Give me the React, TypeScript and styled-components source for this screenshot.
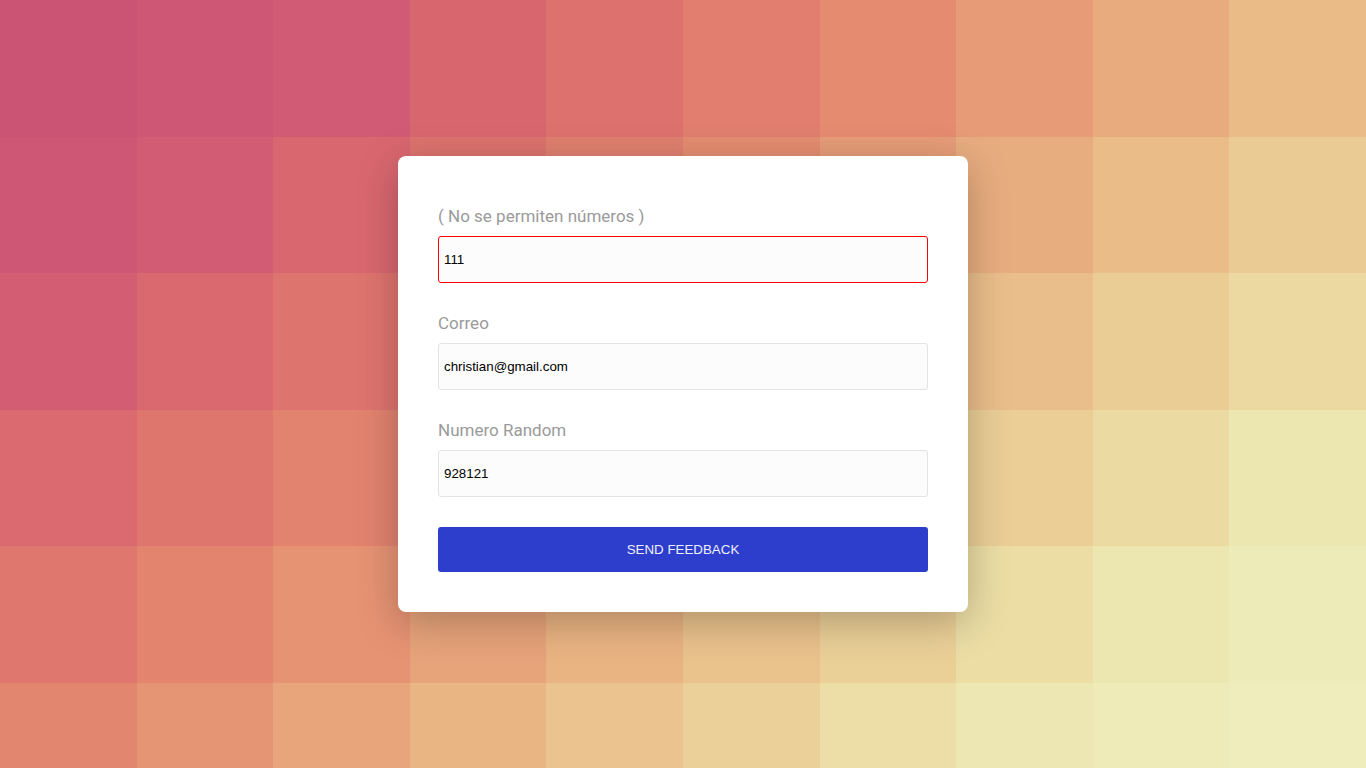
import React from "react";
import styled, { createGlobalStyle } from "styled-components";

const GlobalStyle = createGlobalStyle`
  html, body { margin: 0; padding: 0; height: 100%; overflow: hidden; }
  body { font-family: "Liberation Sans", Arial, sans-serif; }
  * { box-sizing: border-box; }
`;

const STOPS: [number, number, number][] = [
  [203, 84, 117],
  [206, 87, 118],
  [209, 91, 116],
  [216, 102, 111],
  [221, 113, 110],
  [225, 126, 111],
  [229, 139, 112],
  [231, 155, 119],
  [232, 171, 126],
  [234, 187, 135],
  [234, 201, 146],
  [235, 214, 157],
  [236, 228, 172],
  [237, 234, 183],
  [238, 236, 186],
  [239, 237, 188],
];

function tileColor(c: number, r: number): string {
  const p = Math.min(c + 1.12 * r, STOPS.length - 1.001);
  const i = Math.floor(p);
  const t = p - i;
  const a = STOPS[i];
  const b = STOPS[i + 1];
  const mix = (k: number) => Math.round(a[k] + (b[k] - a[k]) * t);
  return `rgb(${mix(0)}, ${mix(1)}, ${mix(2)})`;
}

const Page = styled.div`
  position: relative;
  width: 100vw;
  height: 100vh;
  overflow: hidden;
`;

const Mosaic = styled.div`
  display: grid;
  grid-template-columns: repeat(10, 1fr);
  grid-auto-rows: 10vw;
  width: 100%;
`;

const Tile = styled.div<{ $bg: string }>`
  background: ${(p) => p.$bg};
`;

const Center = styled.div`
  position: absolute;
  inset: 0;
  display: flex;
  align-items: center;
  justify-content: center;
`;

const Card = styled.form`
  width: 570px;
  background: #ffffff;
  border-radius: 8px;
  box-shadow: 0 10px 40px rgba(0, 0, 0, 0.25);
  padding: 50px 40px 40px;
  display: flex;
  flex-direction: column;
  gap: 30px;
`;

const Field = styled.div`
  display: flex;
  flex-direction: column;
`;

const Label = styled.label`
  font-family: Roboto, "Noto Sans", sans-serif;
  font-size: 17px;
  line-height: 21px;
  color: #9a9a9a;
  margin-bottom: 9px;
`;

const Input = styled.input<{ $invalid?: boolean }>`
  height: 47px;
  width: 100%;
  padding: 0 5px;
  font-family: "Liberation Sans", Arial, sans-serif;
  font-size: 13.333px;
  color: #000;
  background: #fcfcfc;
  border: 1px solid ${(p) => (p.$invalid ? "#ff0000" : "#e3e3e3")};
  border-radius: 3px;
  outline: none;
`;

const Button = styled.button`
  height: 45px;
  width: 100%;
  border: none;
  border-radius: 3px;
  background: #2d3ecc;
  color: #eef0fc;
  font-family: "Liberation Sans", Arial, sans-serif;
  font-size: 13.333px;
  text-transform: uppercase;
  cursor: pointer;
`;

export default function App() {
  const tiles = [];
  for (let r = 0; r < 6; r++) {
    for (let c = 0; c < 10; c++) {
      tiles.push(<Tile key={`${r}-${c}`} $bg={tileColor(c, r)} />);
    }
  }
  return (
    <>
      <GlobalStyle />
      <Page>
        <Mosaic>{tiles}</Mosaic>
        <Center>
          <Card onSubmit={(e) => e.preventDefault()}>
            <Field>
              <Label>( No se permiten números )</Label>
              <Input $invalid defaultValue="111" />
            </Field>
            <Field>
              <Label>Correo</Label>
              <Input defaultValue="christian@gmail.com" />
            </Field>
            <Field>
              <Label>Numero Random</Label>
              <Input defaultValue="928121" />
            </Field>
            <Button type="submit">Send Feedback</Button>
          </Card>
        </Center>
      </Page>
    </>
  );
}
